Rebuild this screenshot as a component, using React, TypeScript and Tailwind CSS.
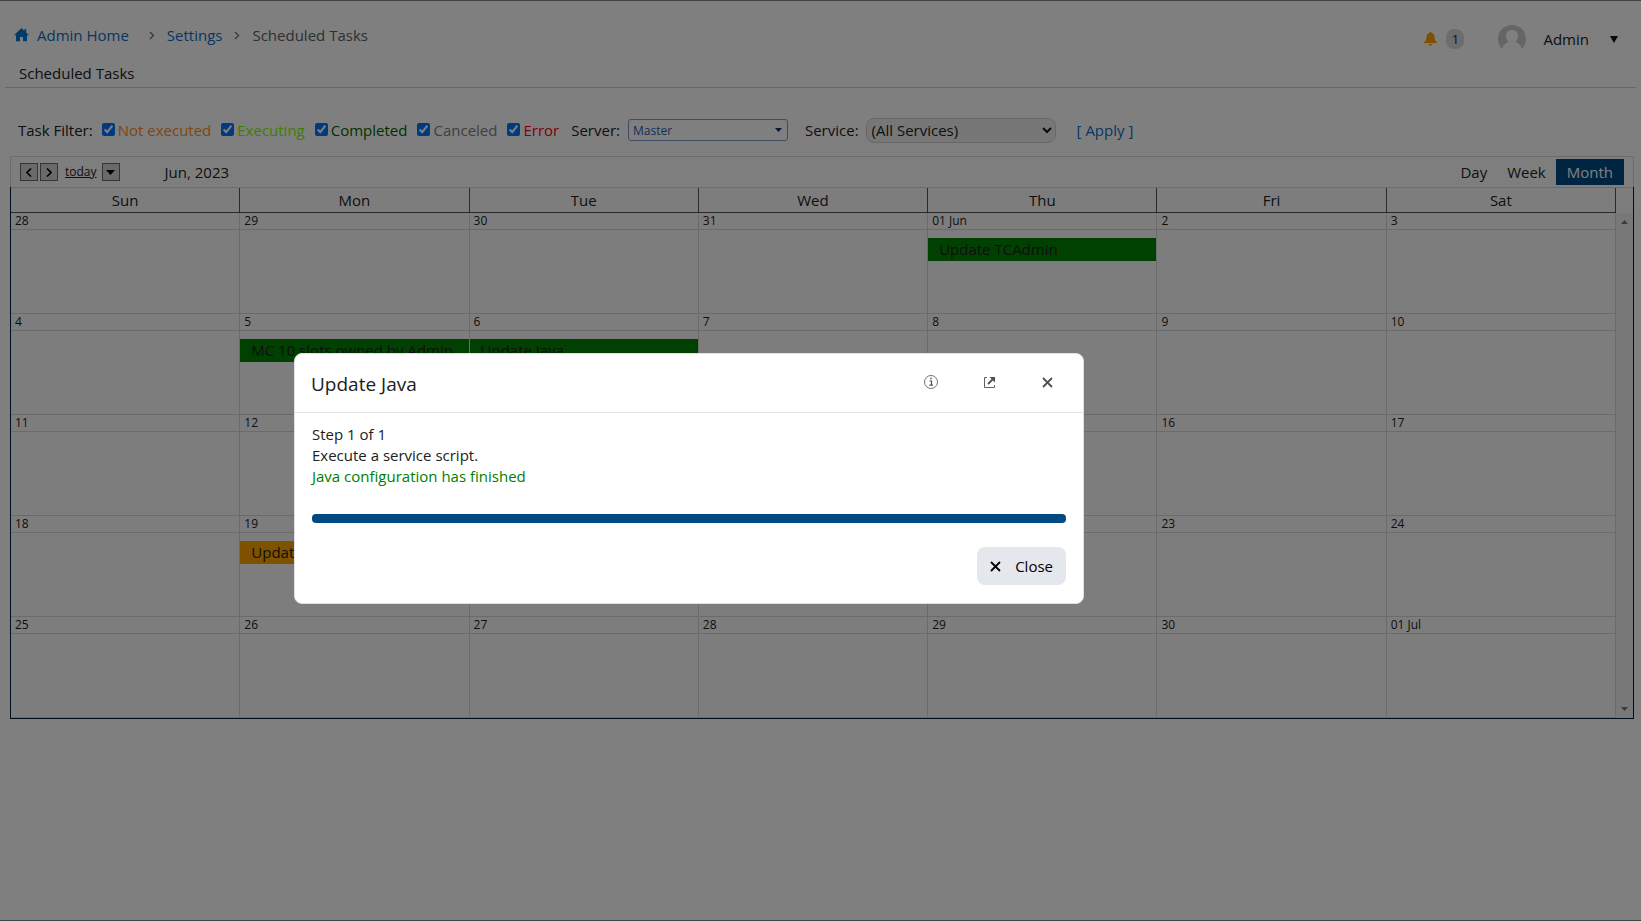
import type { ReactNode } from "react";

type TaskEvent = { title: string; tone: "done" | "pending" };
type Day = { label: string; event?: TaskEvent };

const weekdays = ["Sun", "Mon", "Tue", "Wed", "Thu", "Fri", "Sat"];

const weeks: Day[][] = [
  [
    { label: "28" },
    { label: "29" },
    { label: "30" },
    { label: "31" },
    { label: "01 Jun", event: { title: "Update TCAdmin", tone: "done" } },
    { label: "2" },
    { label: "3" },
  ],
  [
    { label: "4" },
    { label: "5", event: { title: "MC 10 slots owned by Admin", tone: "done" } },
    { label: "6", event: { title: "Update Java", tone: "done" } },
    { label: "7" },
    { label: "8" },
    { label: "9" },
    { label: "10" },
  ],
  ["11", "12", "13", "14", "15", "16", "17"].map((label) => ({ label })),
  [
    { label: "18" },
    { label: "19", event: { title: "Update", tone: "pending" } },
    { label: "20" },
    { label: "21" },
    { label: "22" },
    { label: "23" },
    { label: "24" },
  ],
  ["25", "26", "27", "28", "29", "30", "01 Jul"].map((label) => ({ label })),
];

const filters = [
  { id: "not-executed", label: "Not executed", color: "text-[#ff8c1a]" },
  { id: "executing", label: "Executing", color: "text-[#7cfc00]" },
  { id: "completed", label: "Completed", color: "text-[#006400]" },
  { id: "canceled", label: "Canceled", color: "text-[#808080]" },
  { id: "error", label: "Error", color: "text-[#ff0000]" },
];

function Crumb({ children }: { children: ReactNode }) {
  return (
    <a href="#" className="text-[#0f6cc4]">
      {children}
    </a>
  );
}

function CrumbArrow() {
  return (
    <svg width="6" height="9" viewBox="0 0 6 9" fill="none" stroke="#666" strokeWidth="1.1" aria-hidden="true">
      <path d="M1 1 4.600 4.500 1 8" />
    </svg>
  );
}

function CrossIcon() {
  return (
    <svg width="11" height="11" viewBox="0 0 11 11" fill="none" stroke="currentColor" strokeWidth="1.800" aria-hidden="true">
      <path d="M1 1l9 9M10 1l-9 9" />
    </svg>
  );
}

function TopBar() {
  return (
    <header className="flex items-start justify-between pt-[22px] pr-[23px] pl-3.5">
      <nav aria-label="Breadcrumb" className="flex h-6 items-center">
        <svg width="15" height="14" viewBox="0 0 15 14" fill="#0078d4" aria-hidden="true">
          <path d="M7.500 0 0 7.200h2V13.200h4V9h3v4.200h4V7.200h2L12.200 4.500V1.200h-1.900v1.500z" />
        </svg>
        <span className="ml-2">
          <Crumb>Admin Home</Crumb>
        </span>
        <span className="mr-3 ml-5">
          <CrumbArrow />
        </span>
        <Crumb>Settings</Crumb>
        <span className="mx-3">
          <CrumbArrow />
        </span>
        <span className="text-[#5c6066]">Scheduled Tasks</span>
      </nav>
      <div className="mt-px flex h-[30px] items-center">
        <svg width="13" height="14" viewBox="0 0 13 14" fill="#ff9d00" aria-hidden="true">
          <path d="M6.500 0c.6 0 1 .4 1 1 2 .5 3 2 3 4.200 0 2.600.7 3.800 2.500 5v.9H0v-.9c1.800-1.200 2.500-2.400 2.500-5C2.500 3 3.500 1.500 5.500 1c0-.6.4-1 1-1zM4.500 12.100h4c-.2 1.100-1 1.700-2 1.700s-1.800-.6-2-1.700z" />
        </svg>
        <span className="ml-[9px] flex h-5 w-[18px] items-center justify-center rounded-lg bg-[#d6dade] text-[13px] text-[#222]">
          1
        </span>
        <svg className="ml-[34px]" width="28" height="28" viewBox="0 0 28 28" aria-hidden="true">
          <circle cx="14" cy="14" r="14" fill="#cbcbcb" />
          <path
            d="M14 5c3.800 0 6 2.700 6 6 0 2.600-1 4.400-2.200 5.500.3 1 .9 1.300 2 1.800 1.900.9 3.200 2.800 4 5.700V28H4v-4c.8-2.900 2.200-4.800 4.200-5.700 1.100-.5 1.700-.8 2-1.800C9 15.400 8 13.600 8 11c0-3.300 2.200-6 6-6z"
            fill="#fff"
          />
        </svg>
        <button type="button" className="ml-[17px] flex items-center gap-[21px]">
          Admin
          <svg width="8" height="7" viewBox="0 0 8 7" aria-hidden="true">
            <path d="M0 0h8L4 7z" fill="#111" />
          </svg>
        </button>
      </div>
    </header>
  );
}

function FilterBar() {
  return (
    <form className="mt-[29px] flex h-[26px] items-center pl-[18px] whitespace-nowrap">
      <span className="mr-[9px]">Task Filter:</span>
      <div className="flex items-center gap-2.5">
        {filters.map((f) => (
          <div key={f.id} className="flex items-center gap-[3px]">
            <input id={f.id} type="checkbox" defaultChecked className="mb-0.5 size-[13px]" />
            <label htmlFor={f.id} className={f.color}>
              {f.label}
            </label>
          </div>
        ))}
      </div>
      <label htmlFor="server" className="ml-3">
        Server:
      </label>
      <div className="relative ml-2 h-[22px] w-40">
        <select
          id="server"
          className="block size-full appearance-none rounded-[3px] border border-[#7a9cc9] bg-white pt-px pl-1 text-xs text-[#1e62b4]"
        >
          <option>Master</option>
        </select>
        <svg className="pointer-events-none absolute top-[9px] right-1.5" width="7" height="4" viewBox="0 0 7 4" aria-hidden="true">
          <path d="M0 0h7L3.500 4z" fill="#0f2f66" />
        </svg>
      </div>
      <label htmlFor="service" className="ml-[17px]">
        Service:
      </label>
      <div className="relative ml-[7px] h-[25px] w-[190px]">
        <select
          id="service"
          className="block size-full appearance-none rounded-lg border border-[#cfcfcf] bg-[#efefef] pl-[5px] leading-5"
        >
          <option>(All Services)</option>
        </select>
        <svg
          className="pointer-events-none absolute top-[9px] right-1"
          width="10"
          height="7"
          viewBox="0 0 10 7"
          fill="none"
          stroke="#111"
          strokeWidth="2"
          aria-hidden="true"
        >
          <path d="M1 1l4 4 4-4" />
        </svg>
      </div>
      <a href="#" className="ml-[21px] text-[#0f6cc4]">
        [ Apply ]
      </a>
    </form>
  );
}

const stepButton = "flex size-[18px] items-center justify-center border border-[#6b6b6b] bg-[#d4d4d4]";

function Toolbar() {
  return (
    <div className="flex h-[31px] items-center border border-b-0 border-[#d8d8d8] bg-[#fdfdfd] pl-[9px]">
      <button type="button" aria-label="Previous month" className={stepButton}>
        <svg width="6" height="9" viewBox="0 0 6 9" fill="none" stroke="#000" strokeWidth="1.600" aria-hidden="true">
          <path d="M5 .5 1 4.500l4 4" />
        </svg>
      </button>
      <button type="button" aria-label="Next month" className={stepButton + " ml-0.5"}>
        <svg width="6" height="9" viewBox="0 0 6 9" fill="none" stroke="#000" strokeWidth="1.600" aria-hidden="true">
          <path d="M1 .5l4 4-4 4" />
        </svg>
      </button>
      <a href="#" className="ml-[7px] text-xs underline">
        today
      </a>
      <button type="button" aria-label="Pick a date" className={stepButton + " ml-[5px]"}>
        <svg width="9" height="5" viewBox="0 0 9 5" aria-hidden="true">
          <path d="M0 0h9L4.500 5z" fill="#000" />
        </svg>
      </button>
      <span className="ml-[45px]">Jun, 2023</span>
      <div className="mr-[9px] ml-auto flex items-center">
        <button type="button" className="h-[26px] px-2.5">
          Day
        </button>
        <button type="button" className="h-[26px] px-2.5">
          Week
        </button>
        <button type="button" className="h-[26px] bg-[#004b85] px-[11px] text-white">
          Month
        </button>
      </div>
    </div>
  );
}

function Calendar() {
  return (
    <div className="flex border border-t-0 border-[#00183f] bg-[#fbfbfb]">
      <table className="w-full min-w-0 flex-1 table-fixed border-separate border-spacing-0 border-t border-[#d8d8d8]">
        <thead>
          <tr>
            {weekdays.map((d) => (
              <th key={d} scope="col" className="h-[25px] border-r border-b border-[#555] p-0 leading-6 font-normal">
                {d}
              </th>
            ))}
          </tr>
        </thead>
        <tbody>
          {weeks.map((week, w) => (
            <tr key={w}>
              {week.map((day) => (
                <td key={day.label} className="h-[101px] border-r border-b border-[#d6d6d6] p-0 align-top">
                  <div className="h-[17px] border-b border-[#d6d6d6] pl-1 text-xs leading-4">{day.label}</div>
                  {day.event && (
                    <div
                      className={
                        day.event.tone === "done"
                          ? "mt-2 h-[23px] overflow-hidden bg-[#008000] pl-[11px] leading-[23px] whitespace-nowrap"
                          : "mt-2 h-[23px] overflow-hidden bg-[#ffa500] pl-[11px] leading-[23px] whitespace-nowrap"
                      }
                    >
                      {day.event.title}
                    </div>
                  )}
                </td>
              ))}
            </tr>
          ))}
        </tbody>
      </table>
      <div className="flex w-[17px] shrink-0 flex-col border-t border-[#d8d8d8]">
        <div className="h-[25px]" />
        <div className="flex flex-1 flex-col items-center justify-between bg-[#f1f1f1] py-[7px]">
          <svg width="7" height="4" viewBox="0 0 7 4" aria-hidden="true">
            <path d="M0 4h7L3.500 0z" fill="#777" />
          </svg>
          <svg width="7" height="4" viewBox="0 0 7 4" aria-hidden="true">
            <path d="M0 0h7L3.500 4z" fill="#777" />
          </svg>
        </div>
      </div>
    </div>
  );
}

function TaskDialog() {
  return (
    <div className="fixed inset-0 bg-black/50 pt-[353px] pl-[294px]">
      <section
        role="dialog"
        aria-labelledby="dialog-title"
        className="w-[790px] max-w-full rounded-lg border border-[#dee2e6] bg-white"
      >
        <header className="flex h-[59px] items-center border-b border-[#dee2e6] pr-[29px] pl-4">
          <h2 id="dialog-title" className="pt-0.5 text-[19px]">
            Update Java
          </h2>
          <div className="mb-0.5 ml-auto flex items-center gap-11 text-[#4a5056]">
            <button type="button" aria-label="Details" className="flex size-3.5 items-center justify-center">
              <svg width="14" height="14" viewBox="0 0 14 14" fill="none" stroke="currentColor" aria-hidden="true">
                <circle cx="7" cy="7" r="6.500" strokeWidth=".8" />
                <path d="M5.500 6h2v4M5.300 10.200h3.600" strokeWidth="1.200" />
                <path d="M6.200 3.500h1.500" strokeWidth="1.500" />
              </svg>
            </button>
            <button type="button" aria-label="Open in new window" className="flex size-3.5 items-center justify-center">
              <svg width="11" height="11" viewBox="0 0 11 11" fill="none" stroke="currentColor" aria-hidden="true">
                <path d="M3 .5H.5v10h10V8" strokeWidth=".9" />
                <path d="M4 7l4.500-4.500" strokeWidth="1.800" />
                <path d="M5.500 0H11v5.500z" fill="currentColor" stroke="none" />
              </svg>
            </button>
            <button type="button" aria-label="Close dialog" className="flex size-3.5 items-center justify-center">
              <CrossIcon />
            </button>
          </div>
        </header>
        <div className="px-[17px] pt-[11px] pb-[18px]">
          <div className="leading-[21px]">
            <p>Step 1 of 1</p>
            <p>Execute a service script.</p>
            <p className="text-[#008000]">Java configuration has finished</p>
          </div>
          <div
            role="progressbar"
            aria-label="Task progress"
            aria-valuenow={100}
            className="mt-[27px] h-[9px] rounded bg-[#004b85]"
          />
          <div className="mt-6 flex justify-end">
            <button type="button" className="flex h-[38px] items-center gap-3.5 rounded-lg bg-[#e4e7eb] px-[13px] text-black">
              <CrossIcon />
              Close
            </button>
          </div>
        </div>
      </section>
    </div>
  );
}

export default function App() {
  return (
    <div className="min-h-screen border-y border-t-[#808080] border-b-[#6a8c8c] bg-white font-['Open_Sans','Noto_Sans',sans-serif] text-[15px] leading-6 text-[#212121]">
      <TopBar />
      <h1 className="mx-[5px] mt-[7px] border-b border-[#d0d0d0] pb-0.5 pl-3.5">Scheduled Tasks</h1>
      <FilterBar />
      <main className="mt-[13px] mr-[7px] ml-2.5">
        <Toolbar />
        <Calendar />
      </main>
      <TaskDialog />
    </div>
  );
}
